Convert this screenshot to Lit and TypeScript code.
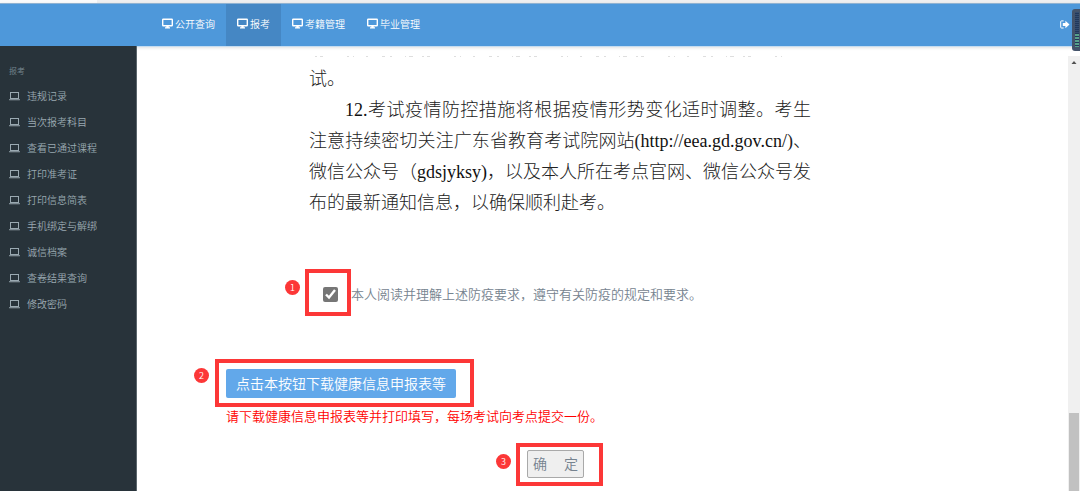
import { LitElement, html, css, svg } from "lit";
import { customElement, state } from "lit/decorators.js";

const NAV = ["公开查询", "报考", "考籍管理", "毕业管理"];

const MENU = [
  "违规记录",
  "当次报考科目",
  "查看已通过课程",
  "打印准考证",
  "打印信息简表",
  "手机绑定与解绑",
  "诚信档案",
  "查卷结果查询",
  "修改密码",
];

const monitorIcon = html`<svg class="icon" viewBox="0 0 11 11" aria-hidden="true">
  ${svg`<rect x="0.7" y="1.200" width="9.600" height="6.600" rx="0.5" fill="none" stroke="currentColor" stroke-width="1.4"/>
  <path d="M4.300 8h2.400v1.300h1.300v1.200H3V9.300h1.300z" fill="currentColor"/>`}
</svg>`;

const laptopIcon = html`<svg class="icon" viewBox="0 0 11 9" aria-hidden="true">
  ${svg`<rect x="1.500" y="0.5" width="8" height="6" fill="none" stroke="currentColor" stroke-width="1"/>
  <path d="M0 7.200h11v0.600q0 0.500-0.900 0.500H0.900Q0 8.300 0 7.800z" fill="currentColor"/>`}
</svg>`;

@customElement("top-bar")
class TopBar extends LitElement {
  @state() active = 1;

  static styles = css`
    :host {
      display: block;
      background: #4e98da;
      border-top: 1px solid #8fb2d2;
      border-bottom: 1px solid #c5dcf0;
      box-shadow: 0 1px 3px rgba(0, 0, 0, 0.12);
      position: relative;
    }
    .bar {
      display: flex;
      align-items: stretch;
      height: 42px;
      padding-left: 151px;
    }
    .item {
      display: flex;
      align-items: center;
      gap: 2px;
      padding: 0 11px 3px;
      color: #fff;
      font-size: 10px;
      text-decoration: none;
    }
    .item.active {
      background: #4587c4;
    }
    .icon {
      width: 11px;
      height: 11px;
    }
    .logout {
      display: flex;
      align-items: center;
      margin-left: auto;
      margin-right: 10px;
      padding: 0 0 2px;
      border: 0;
      background: none;
      color: #fff;
    }
    .logout .icon {
      width: 10px;
      height: 9px;
    }
    .meter {
      position: absolute;
      right: 0;
      top: 5px;
      box-sizing: border-box;
      width: 8px;
      height: 42px;
      padding: 3px 1px 4px 3px;
      border-radius: 3px 0 0 3px;
      background: #44536a;
      z-index: 2;
    }
    .meter svg {
      display: block;
      width: 4px;
      height: 35px;
    }
  `;

  render() {
    return html`<nav class="bar">
        ${NAV.map(
          (label, i) => html`<a
            class="item ${i === this.active ? "active" : ""}"
            href="#"
            @click=${(e: Event) => {
              e.preventDefault();
              this.active = i;
            }}
            >${monitorIcon}<span>${label}</span></a
          >`
        )}
        <button class="logout" aria-label="退出">
          <svg class="icon" viewBox="0 0 10 9" aria-hidden="true">
            <path d="M3.600 0.900H1.500Q0.700 0.900 0.700 1.700V7.200Q0.700 8 1.500 8H3.600" fill="none" stroke="currentColor" stroke-width="1"/>
            <path d="M2.800 3h2.600V0.800L9.500 4.500 5.400 8.200V6H2.800z" fill="currentColor"/>
          </svg>
        </button>
      </nav>
      <div class="meter">
        <svg viewBox="0 0 4 35" aria-hidden="true">
          <rect width="4" height="35" fill="#22385a" />
          <path d="M2 0V22" stroke="#344d70" stroke-width="4" stroke-dasharray="1 1" />
          <path d="M2 22V35" stroke="#57a08a" stroke-width="4" stroke-dasharray="2 1" />
        </svg>
      </div>`;
  }
}

@customElement("side-menu")
class SideMenu extends LitElement {
  static styles = css`
    :host {
      display: block;
      box-sizing: border-box;
      background: #28333a;
      border-right: 1px solid #5b666c;
      color: #9aa9b1;
    }
    .title {
      margin: 0;
      padding: 18px 9px 5px;
      font-size: 8px;
      line-height: 14px;
      font-weight: inherit;
      color: #76868f;
    }
    .list {
      margin: 0;
      padding: 0;
      list-style: none;
    }
    .link {
      display: flex;
      align-items: center;
      gap: 7px;
      padding-left: 9px;
      font-size: 10px;
      line-height: 26px;
      color: inherit;
      text-decoration: none;
    }
    .icon {
      width: 11px;
      height: 9px;
    }
  `;

  render() {
    return html`<h2 class="title">报考</h2>
      <ul class="list">
        ${MENU.map(
          (label) =>
            html`<li><a class="link" href="#">${laptopIcon}<span>${label}</span></a></li>`
        )}
      </ul>`;
  }
}

@customElement("app-root")
class AppRoot extends LitElement {
  static styles = css`
    :host {
      display: flex;
      flex-direction: column;
      min-height: 100vh;
      background: #fff;
      font-family: "Noto Sans CJK SC", sans-serif;
      font-weight: 350;
    }
    .strip {
      height: 3px;
      background: linear-gradient(90deg, #fbfbfb 97px, #efeff0 97px);
    }
    .body {
      flex: 1;
      display: flex;
    }
    .side {
      flex: 0 0 137px;
      margin-top: -1px;
      z-index: 1;
    }
    .main {
      flex: 1;
      min-width: 0;
      padding: 9px 0 12px 89px;
    }
    .notice {
      width: 502px;
      margin-left: 83px;
      color: #222;
      font-family: "Liberation Serif", "Noto Sans CJK SC", serif;
      font-size: 18px;
      font-weight: 300;
      line-height: 31px;
    }
    .cut {
      display: block;
      width: 100%;
      height: 8px;
    }
    .notice p {
      margin: 0;
    }
    .line {
      display: block;
      white-space: nowrap;
    }
    .full {
      text-align: justify;
      text-align-last: justify;
    }
    .first {
      text-indent: 36px;
    }
    .latin {
      color: #111;
    }
    .agree {
      display: flex;
      align-items: center;
      gap: 13px;
      margin: 65px 0 0 97px;
      font-size: 13px;
      line-height: 20px;
      color: #76838f;
    }
    .check {
      display: block;
      width: 15px;
      height: 15px;
      margin: 0;
      accent-color: #767676;
    }
    .mark {
      position: relative;
      display: block;
      width: fit-content;
    }
    .frame {
      position: absolute;
      border: 4px solid #fc3737;
      pointer-events: none;
    }
    .badge {
      position: absolute;
      width: 15px;
      border-radius: 50%;
      background: #fc3737;
      color: #fff;
      font-size: 9px;
      line-height: 15px;
      text-align: center;
    }
    .one .frame {
      inset: -18px -13px -14px -18px;
    }
    .one .badge {
      left: -38px;
      top: -7px;
    }
    .two {
      margin-top: 65px;
    }
    .two .frame {
      inset: -10px -18px -9px -11px;
    }
    .two .badge {
      left: -32px;
      top: -1px;
    }
    .three {
      margin: 25px 0 0 301px;
    }
    .three .frame {
      inset: -7px -19px -8px -11px;
    }
    .three .badge {
      left: -31px;
      top: 4px;
    }
    .download,
    .confirm {
      display: block;
      font-family: inherit;
      font-weight: inherit;
      font-size: 14px;
      border-radius: 2px;
    }
    .download {
      height: 29px;
      padding: 0 10px 2px;
      border: 0;
      background: #62a8ea;
      color: #fff;
    }
    .confirm {
      height: 28px;
      padding: 0 5px 2px;
      border: 1px solid #a9a9a9;
      background: #efefef;
      color: #76838f;
      white-space: pre;
    }
    .hint {
      margin: 8px 0 1px;
      font-size: 13px;
      line-height: 19px;
      color: #f00;
    }
    .scroll {
      flex: 0 0 12px;
      margin-top: 9px;
      display: flex;
      flex-direction: column;
      justify-content: space-between;
      background: #f0f0f0;
    }
    .arrow {
      display: block;
      width: 12px;
      height: 12px;
    }
    .thumb {
      height: 18%;
      margin: 0 1px;
      background: #c1c1c1;
    }
  `;

  render() {
    return html`
      <div class="strip"></div>
      <top-bar></top-bar>
      <div class="body">
        <side-menu class="side"></side-menu>
        <main class="main">
          <article class="notice">
            <svg class="cut" viewBox="0 0 502 8" preserveAspectRatio="none" aria-hidden="true">
              <path
                d="M6 0.500H480"
                stroke="#dedede"
                stroke-dasharray="2 3 3 24 2 4 1 12 2 14 3 5 2 13 1 3 4 9"
              />
            </svg>
            <p><span class="line">试。</span></p>
            <p>
              <span class="line full first"><span class="latin">12.</span>考试疫情防控措施将根据疫情形势变化适时调整。考生</span>
              <span class="line full">注意持续密切关注广东省教育考试院网站(<span class="latin">http://eea.gd.gov.cn/</span>)、</span>
              <span class="line full">微信公众号（<span class="latin">gdsjyksy)</span>，以及本人所在考点官网、微信公众号发</span>
              <span class="line">布的最新通知信息，以确保顺利赴考。</span>
            </p>
          </article>

          <div class="agree">
            <span class="mark one">
              <input class="check" id="agree" type="checkbox" checked />
              <span class="frame"></span><span class="badge">1</span>
            </span>
            <label for="agree">本人阅读并理解上述防疫要求，遵守有关防疫的规定和要求。</label>
          </div>

          <div class="mark two">
            <button class="download">点击本按钮下载健康信息申报表等</button>
            <span class="frame"></span><span class="badge">2</span>
          </div>
          <p class="hint">请下载健康信息申报表等并打印填写，每场考试向考点提交一份。</p>

          <div class="mark three">
            <button class="confirm">确&emsp;&nbsp;定</button>
            <span class="frame"></span><span class="badge">3</span>
          </div>
        </main>
        <div class="scroll">
          <svg class="arrow" viewBox="0 0 12 12" aria-hidden="true">
            <path d="M3.500 8h5L6 5z" fill="#505050" />
          </svg>
          <div class="thumb"></div>
        </div>
      </div>
    `;
  }
}
